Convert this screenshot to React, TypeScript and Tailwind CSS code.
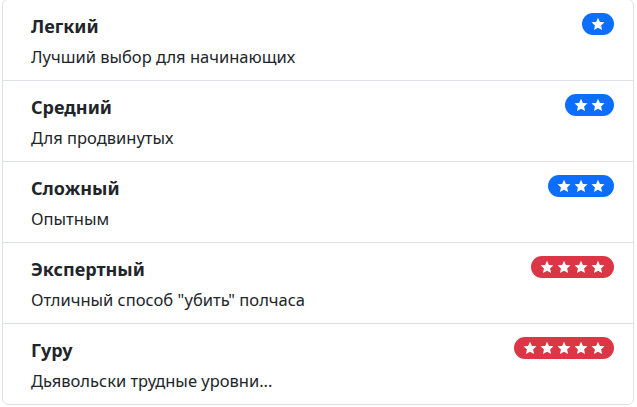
import React from "react";

type Item = { title: string; desc: string; stars: number; color: string };

const items: Item[] = [
  { title: "Легкий", desc: "Лучший выбор для начинающих", stars: 1, color: "bg-[#0d6efd]" },
  { title: "Средний", desc: "Для продвинутых", stars: 2, color: "bg-[#0d6efd]" },
  { title: "Сложный", desc: "Опытным", stars: 3, color: "bg-[#0d6efd]" },
  { title: "Экспертный", desc: "Отличный способ \"убить\" полчаса", stars: 4, color: "bg-[#dc3545]" },
  { title: "Гуру", desc: "Дьявольски трудные уровни...", stars: 5, color: "bg-[#dc3545]" },
];

function Star() {
  return (
    <svg width="14" height="14" viewBox="0 0 24 24" className="block">
      <path
        fill="#fff"
        d="M12 1.2l3.3 7.2 7.9.8-5.9 5.3 1.7 7.8L12 18.3l-6.9 4 1.7-7.8L.9 9.2l7.9-.8z"
      />
    </svg>
  );
}

export default function App() {
  return (
    <div className="bg-white w-[637px] h-[407px] overflow-hidden" style={{ fontFamily: '"Noto Sans", sans-serif' }}>
      <div className="ml-[2px] mt-[-1px] w-[632px] border border-[#dee2e6] rounded-[6px] text-[#212529]">
        {items.map((it, i) => (
          <div
            key={i}
            className={
              "flex items-start justify-between pl-[28px] pr-[19px] pt-[13px] " +
              (i < items.length - 1 ? "h-[81px] border-b border-[#dee2e6]" : "h-[80px]")
            }
          >
            <div>
              <div className="text-[18px] font-bold leading-[26px]">{it.title}</div>
              <div className="text-[16.5px] leading-[24px] mt-[6px]">{it.desc}</div>
            </div>
            <div className={"flex items-center gap-[3px] px-[9px] py-[4px] rounded-full " + it.color}>
              {Array.from({ length: it.stars }).map((_, k) => (
                <Star key={k} />
              ))}
            </div>
          </div>
        ))}
      </div>
    </div>
  );
}
